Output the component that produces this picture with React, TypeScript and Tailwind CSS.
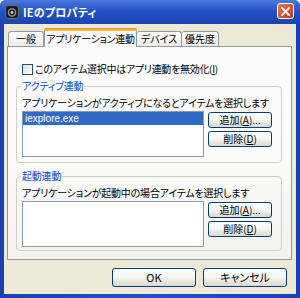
import React from "react";

const jp = "font-['Noto_Sans_CJK_JP',sans-serif] [font-feature-settings:'palt']";

function XPButton({ children, className = "" }: { children: React.ReactNode; className?: string }) {
  return (
    <div
      className={`flex items-center justify-center whitespace-nowrap border border-[#003c74] rounded-[3px] bg-gradient-to-b from-[#ffffff] via-[#f4f4f0] to-[#dcd9cc] text-[10px] leading-none text-black ${className}`}
    >
      {children}
    </div>
  );
}

function GroupBox({
  title,
  desc,
  selected,
  className = "",
}: {
  title: string;
  desc: string;
  selected?: string;
  className?: string;
}) {
  return (
    <div className={`relative border border-[#d0d0bf] rounded-[4px] ${className}`}>
      <div className="absolute left-[4px] top-[-7px] bg-[#fbfbfa] px-[1px] text-[10px] leading-[12px] text-[#0046d5] tracking-[-0.2px]">
        {title}
      </div>
      <div className="pl-[5px] pr-[9px] pt-[10px]">
        <div className="text-[10px] leading-[12px] text-black whitespace-nowrap tracking-[-0.2px]">{desc}</div>
        <div className="flex mt-[2px] gap-[4px]">
          <div className="w-[183px] h-[46px] border border-[#7f9db9] bg-white flex flex-col">
            {selected && (
              <div className="h-[13px] bg-[#316ac5] text-white text-[10px] leading-[13px] pl-[2px] font-['Liberation_Sans',sans-serif]">
                {selected}
              </div>
            )}
          </div>
          <div className="flex flex-col gap-[3px] pt-[1px]">
            <XPButton className="w-[64px] h-[16px]">
              追加(<span className="underline">A</span>)...
            </XPButton>
            <XPButton className="w-[64px] h-[16px]">
              削除(<span className="underline">D</span>)
            </XPButton>
          </div>
        </div>
      </div>
    </div>
  );
}

export default function App() {
  return (
    <div className={`w-[300px] h-[298px] flex flex-col bg-gradient-to-r from-[#1a3fb0] via-[#2451c6] to-[#1a3fb0] rounded-t-[6px] overflow-hidden ${jp}`}>
      {/* title bar */}
      <div className="h-[24px] flex items-center pl-[5px] pr-[6px] bg-gradient-to-b from-[#4a78dc] via-[#2250c4] to-[#1d44b2]">
        <svg width="14" height="14" viewBox="0 0 14 14" className="shrink-0">
          <rect x="0.5" y="0.5" width="13" height="13" rx="2.5" fill="#1b1b1b" stroke="#6d6d6d" />
          <circle cx="7" cy="7.5" r="3.6" fill="none" stroke="#9a9a9a" strokeWidth="1.4" />
          <circle cx="7" cy="7.5" r="1.4" fill="#cfcfcf" />
        </svg>
        <div className="ml-[4px] text-white font-bold text-[11px] leading-none tracking-[0.2px]">IEのプロパティ</div>
        <div className="flex-1" />
        <div className="w-[17px] h-[16px] rounded-[3px] border border-white bg-gradient-to-br from-[#e97b57] via-[#d9512a] to-[#c1431f] flex items-center justify-center mt-[-2px]">
          <svg width="9" height="9" viewBox="0 0 9 9">
            <path d="M1 1 L8 8 M8 1 L1 8" stroke="white" strokeWidth="1.9" strokeLinecap="square" />
          </svg>
        </div>
      </div>
      {/* body */}
      <div className="flex-1 mx-[4px] mb-[4px] bg-[#ece9d8] flex flex-col pl-[3px] pr-[4px] pt-[4px]">
        {/* tabs */}
        <div className="h-[18px] flex items-end pl-[1px] relative z-10">
          <div className="w-[36px] h-[15px] border border-b-0 border-[#919b9c] rounded-t-[3px] bg-gradient-to-b from-white to-[#ecebe6] flex items-center justify-center text-[10px] leading-none whitespace-nowrap">
            一般
          </div>
          <div className="w-[93px] h-[19px] mb-[-1px] border border-b-0 border-[#919b9c] rounded-t-[3px] bg-[#fcfcfe] flex flex-col">
            <div className="h-[3px] rounded-t-[2px] bg-gradient-to-b from-[#e68b2c] to-[#ffc73c] -mx-px -mt-px" />
            <div className="flex-1 flex items-center justify-center text-[10px] leading-none whitespace-nowrap tracking-[-0.3px]">
              アプリケーション連動
            </div>
          </div>
          <div className="w-[45px] h-[15px] border border-b-0 border-l-0 border-[#919b9c] rounded-t-[3px] bg-gradient-to-b from-white to-[#ecebe6] flex items-center justify-center text-[10px] leading-none whitespace-nowrap">
            デバイス
          </div>
          <div className="w-[37px] h-[15px] border border-b-0 border-l-0 border-[#919b9c] rounded-t-[3px] bg-gradient-to-b from-white to-[#ecebe6] flex items-center justify-center text-[10px] leading-none whitespace-nowrap">
            優先度
          </div>
        </div>
        {/* panel */}
        <div className="h-[214px] border border-[#919b9c] bg-gradient-to-b from-[#fcfcfe] via-[#fbfbfa] to-[#f3f2ec] flex flex-col pl-[8px] pr-[9px]">
          <div className="flex items-center h-[14px] mt-[15px] pl-[6px]">
            <div className="w-[11px] h-[11px] border border-[#1c5180] bg-gradient-to-br from-[#dcdcd7] to-white" />
            <div className="ml-[2px] text-[10px] leading-none whitespace-nowrap tracking-[-0.3px]">
              このアイテム選択中はアプリ連動を無効化(<span className="underline">I</span>)
            </div>
          </div>
          <GroupBox
            className="mt-[10px] h-[77px]"
            title="アクティブ連動"
            desc="アプリケーションがアクティブになるとアイテムを選択します"
            selected="iexplore.exe"
          />
          <GroupBox
            className="mt-[13px] h-[75px]"
            title="起動連動"
            desc="アプリケーションが起動中の場合アイテムを選択します"
          />
        </div>
        {/* bottom buttons */}
        <div className="flex justify-end gap-[7px] pt-[8px] pr-[5px]">
          <XPButton className="w-[84px] h-[19px] text-[11px]">OK</XPButton>
          <XPButton className="w-[84px] h-[19px] text-[11px]">キャンセル</XPButton>
        </div>
      </div>
    </div>
  );
}
